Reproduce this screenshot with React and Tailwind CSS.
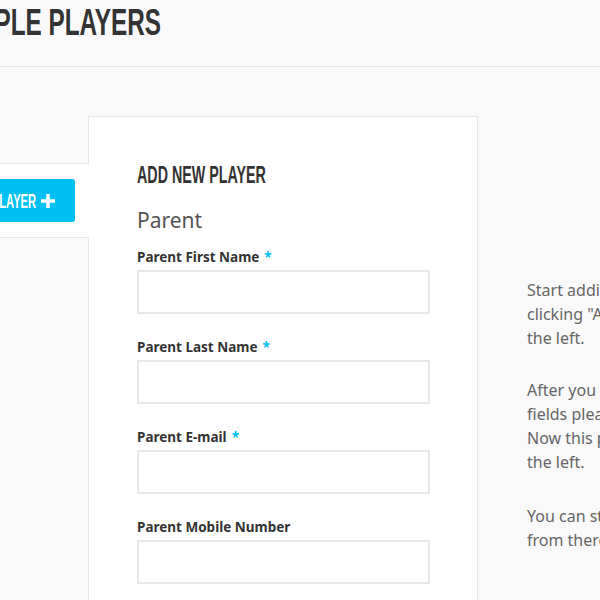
export default function App() {
  const fields = [
    { label: "Parent First Name", required: true },
    { label: "Parent Last Name", required: true },
    { label: "Parent E-mail", required: true },
    { label: "Parent Mobile Number", required: false },
  ];

  return (
    <div className="relative h-[600px] w-[600px] overflow-hidden bg-[#f9f9f9] [font-family:'Noto_Sans',sans-serif]">
      <header className="h-[67px] border-b border-[#e6e6e6]">
        <div className="flex w-[161px] justify-end pt-[3px]">
          <h1 className="shrink-0 origin-right scale-x-[0.675] whitespace-nowrap text-[36px] font-bold leading-[40px] text-[#333] [font-family:'Liberation_Sans',sans-serif]">
            MULTIPLE PLAYERS
          </h1>
        </div>
      </header>

      <div className="flex pt-[49px]">
        <div className="flex w-[89px] shrink-0 flex-col">
          <div className="h-[47px] border-r border-[#e6e6e6]" />
          <div className="flex h-[75px] items-center justify-end border-y border-[#e6e6e6] bg-white pr-[14px]">
            <button className="flex h-[43px] shrink-0 items-center gap-[5px] whitespace-nowrap rounded-[3px] bg-[#00c0f2] pl-[14px] pr-[20px] text-white">
              <span className="origin-right scale-x-[0.56] text-[20px] font-bold leading-none [font-family:'Liberation_Sans',sans-serif]">
                ADD PLAYER
              </span>
              <svg width="14" height="14" viewBox="0 0 14 14">
                <path d="M5.2 0h3.6v5.2H14v3.6H8.8V14H5.2V8.8H0V5.2h5.2z" fill="white" />
              </svg>
            </button>
          </div>
          <div className="h-[400px] border-r border-[#e6e6e6]" />
        </div>

        <div className="w-[389px] shrink-0 border-r border-t border-[#e6e6e6] bg-white pl-[48px] pr-[48px] pt-[44px]">
          <h2 className="origin-left scale-x-[0.595] whitespace-nowrap text-[24px] font-bold leading-[28px] text-[#333] [font-family:'Liberation_Sans',sans-serif]">
            ADD NEW PLAYER
          </h2>
          <h3 className="mt-[18px] text-[21px] leading-[26px] text-[#555]">Parent</h3>
          <div className="mt-[13px] flex flex-col gap-[22px]">
            {fields.map((f) => (
              <div key={f.label}>
                <label className="mt-[2px] block text-[13.5px] font-bold leading-[18px] text-[#333]">
                  {f.label}
                  {f.required && <span className="ml-[5px] text-[#00c0f2]">*</span>}
                </label>
                <input className="mt-[4px] block h-[44px] w-[293px] border-2 border-[#e8e8e8] bg-white" />
              </div>
            ))}
          </div>
        </div>

        <div className="shrink-0 whitespace-nowrap pl-[49px] pt-[162px] text-[16px] leading-[24px] text-[#666]">
          <p>
            Start adding players by
            <br />
            clicking "Add Player" on
            <br />
            the left.
          </p>
          <p className="mt-[28px]">
            After you fill in all the
            <br />
            fields please click Save.
            <br />
            Now this player appears on
            <br />
            the left.
          </p>
          <p className="mt-[30px]">
            You can start editing it
            <br />
            from there.
          </p>
        </div>
      </div>
    </div>
  );
}
